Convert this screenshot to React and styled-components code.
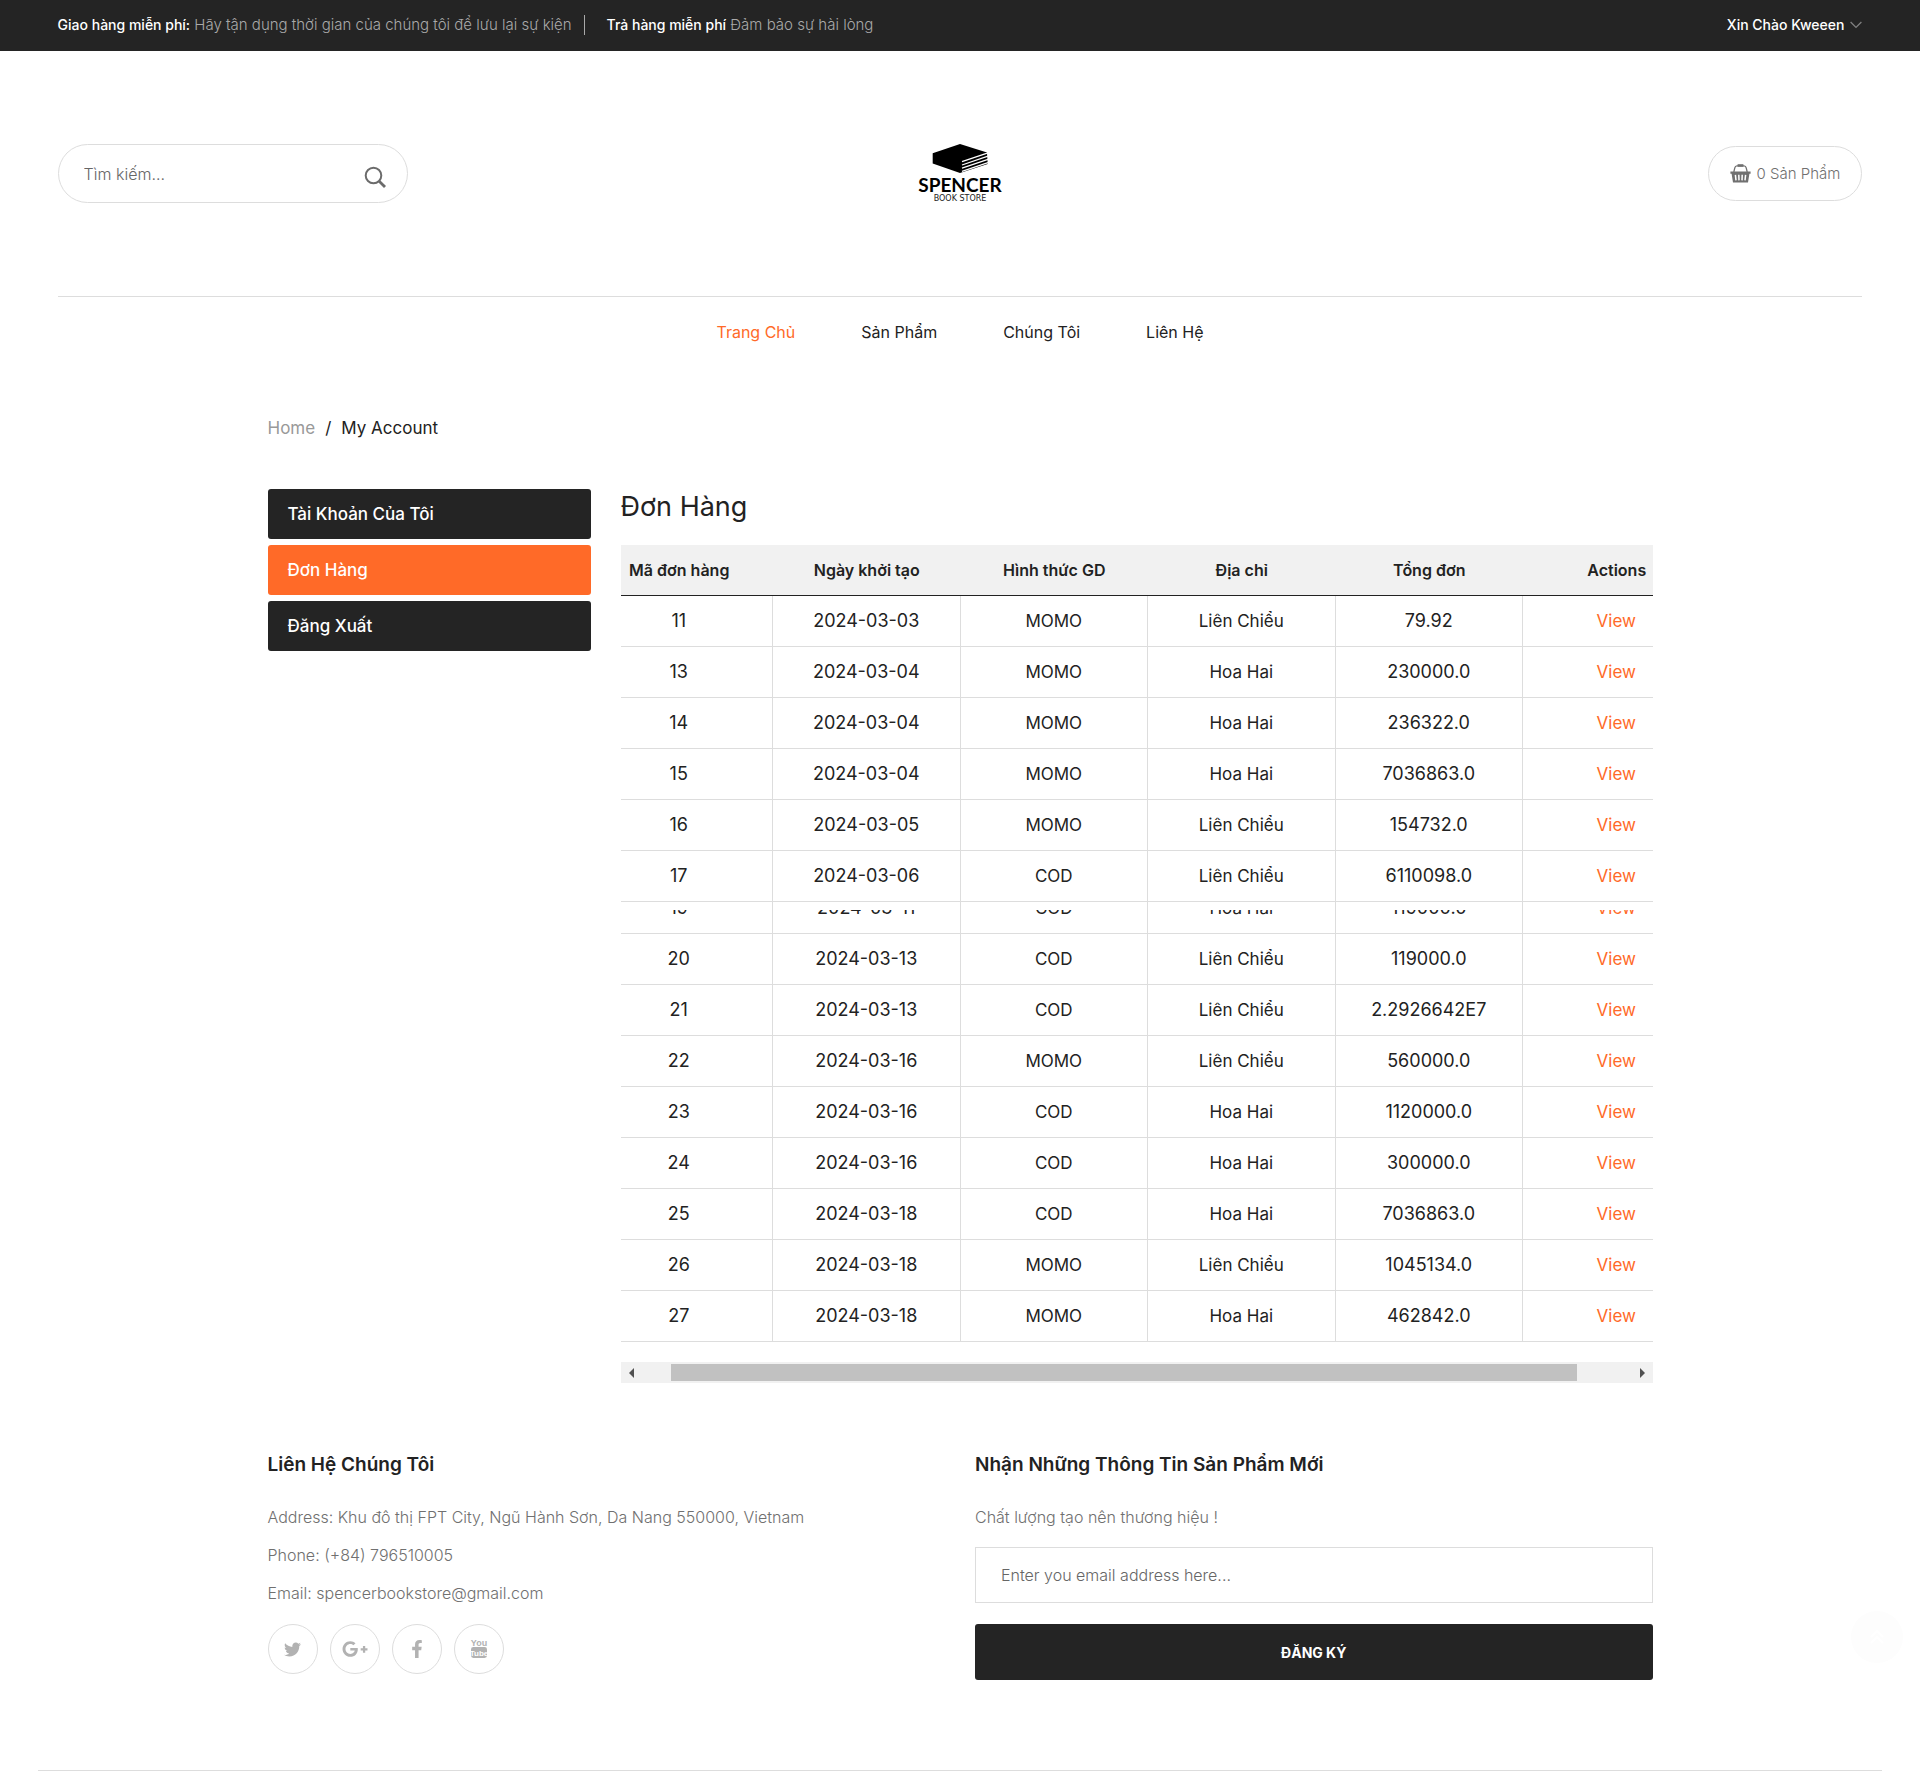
import React, { useLayoutEffect, useRef } from "react";
import styled, { createGlobalStyle } from "styled-components";
import { FaTwitter, FaFacebookF, FaGooglePlusG } from "react-icons/fa";

const ink = "#222222";
const dark = "#242424";
const accent = "#ff6a28";
const line = "#dddddd";
const muted = "#707070";

const GlobalStyle = createGlobalStyle`
  * { box-sizing: border-box; }
  body {
    margin: 0;
    background: #fff;
    color: ${ink};
    font-family: Inter, "Liberation Sans", sans-serif;
    font-size: 16px;
    line-height: 30px;
  }
  a { color: inherit; text-decoration: none; }
  h2, h3, p, ul { margin: 0; padding: 0; }
  ul { list-style: none; }
  button, input { font-family: inherit; }
`;

const TopBar = styled.div`
  display: flex;
  justify-content: space-between;
  align-items: center;
  height: 51px;
  padding: 0 3%;
  background: ${dark};
  color: #a9a9a9;
  font-size: 15px;
  font-weight: 300;
  line-height: 20px;
`;

const Notices = styled.ul`
  display: flex;
  align-items: center;
  padding-bottom: 2px;
`;

const Notice = styled.li`
  padding-left: ${(p) => (p.$divided ? 22 : 0)}px;
  margin-left: ${(p) => (p.$divided ? 12 : 0)}px;
  border-left: ${(p) => (p.$divided ? "1px solid #a9a9a9" : "0")};
`;

const NoticeTitle = styled.span`
  color: #fff;
  font-weight: 500;
  font-size: 14px;
`;

const UserMenu = styled.button`
  display: flex;
  align-items: center;
  gap: 6px;
  padding: 0 0 2px;
  border: 0;
  background: none;
  color: #fff;
  font-size: 14px;
  font-weight: 500;
  line-height: 20px;
`;

const Header = styled.header`
  margin: 0 3%;
`;

const HeaderMain = styled.div`
  display: grid;
  grid-template-columns: 1fr auto 1fr;
  align-items: center;
  padding: 93px 0;
  border-bottom: 1px solid ${line};
`;

const SearchForm = styled.form`
  display: flex;
  align-items: center;
  width: 350px;
  height: 59px;
  padding: 0 20px 0 25px;
  border: 1px solid ${line};
  border-radius: 30px;
`;

const SearchInput = styled.input`
  flex: 1;
  min-width: 0;
  border: 0;
  outline: 0;
  padding: 0;
  background: none;
  font-size: 16px;
  font-weight: 300;
  &::placeholder { color: #666; opacity: 1; }
`;

const IconButton = styled.button`
  display: flex;
  padding: 8px 0 0;
  border: 0;
  background: none;
  color: #6b6b6b;
`;

const LogoLink = styled.a`
  display: flex;
`;

const CartLink = styled.a`
  justify-self: end;
  display: flex;
  align-items: center;
  gap: 6px;
  height: 55px;
  padding: 0 21px;
  border: 1px solid ${line};
  border-radius: 28px;
  color: ${muted};
  font-size: 15px;
  font-weight: 300;
`;

const Nav = styled.nav`
  display: flex;
  justify-content: center;
  gap: 66px;
  line-height: 70px;
`;

const NavLink = styled.a`
  color: ${(p) => (p.$active ? accent : ink)};
`;

const Container = styled.div`
  width: 100%;
  max-width: 1415px;
  margin: 0 auto;
  padding: 0 15px;
`;

const Breadcrumb = styled.nav`
  display: flex;
  gap: 10px;
  padding: 46px 0;
  font-size: 17px;
`;

const CrumbLink = styled.a`
  color: #999;
`;

const Account = styled.main`
  display: grid;
  grid-template-columns: minmax(0, 323fr) minmax(0, 1032fr);
  gap: 30px;
`;

const Tabs = styled.nav`
  display: flex;
  flex-direction: column;
  gap: 6px;
`;

const Tab = styled.a`
  padding: 0 20px;
  border-radius: 3px;
  background: ${(p) => (p.$active ? accent : dark)};
  color: #fff;
  font-size: 17px;
  font-weight: 500;
  line-height: 50px;
`;

const PanelTitle = styled.h3`
  margin-bottom: 20px;
  font-size: 27px;
  font-weight: 400;
  line-height: 36px;
`;

const TableScroller = styled.div`
  overflow: hidden;
`;

const Table = styled.table`
  width: 1125px;
  margin-bottom: 20px;
  table-layout: fixed;
  border-collapse: separate;
  border-spacing: 0;
  text-align: center;
`;

const HeadCell = styled.th`
  height: 51px;
  padding: 0;
  border-bottom: 1px solid ${ink};
  background: #f1f1f1;
  font-size: 16px;
  font-weight: 600;
`;

const Cell = styled.td`
  padding: ${(p) => (p.$short ? "8px 0 0" : "0")};
  border-bottom: 1px solid ${line};
  border-right: 1px solid ${line};
  font-size: ${(p) => (p.$numeric ? 18 : 17)}px;
`;

const CellContent = styled.div`
  display: flex;
  flex-direction: column;
  justify-content: flex-end;
  height: ${(p) => (p.$short ? 23 : 50)}px;
  line-height: 50px;
  overflow: hidden;
`;

const ViewLink = styled.a`
  color: ${accent};
`;

const ScrollBar = styled.div`
  display: flex;
  align-items: center;
  justify-content: space-between;
  height: 21px;
  padding: 0 8px;
  background: #f1f1f1;
`;

const ScrollTrack = styled.div`
  flex: 1;
  display: flex;
  height: 17px;
  margin: 0 8px;
`;

const ScrollThumb = styled.div`
  width: 91.5%;
  margin-left: 3%;
  background: #c1c1c1;
`;

const ScrollArrow = styled.span`
  width: 0;
  height: 0;
  border: solid transparent;
  border-width: 5px;
  border-left: ${(p) => (p.$right ? "5px solid #505050" : "0")};
  border-right: ${(p) => (p.$right ? "0" : "5px solid #505050")};
`;

const FooterGrid = styled.footer`
  display: grid;
  grid-template-columns: 1fr 1fr;
  gap: 30px;
  padding: 67px 0 90px;
`;

const FooterTitle = styled.h3`
  margin-bottom: 22px;
  font-size: 19px;
  font-weight: 600;
`;

const ContactList = styled.ul`
  display: flex;
  flex-direction: column;
  gap: 8px;
  margin-bottom: 16px;
  color: ${muted};
  font-weight: 300;
`;

const Socials = styled.div`
  display: flex;
  gap: 12px;
`;

const SocialLink = styled.a`
  display: flex;
  align-items: center;
  justify-content: center;
  width: 50px;
  height: 50px;
  border: 1px solid ${line};
  border-radius: 50%;
  color: #b2b2b2;
`;

const Newsletter = styled.form`
  display: flex;
  flex-direction: column;
`;

const Slogan = styled.p`
  margin-bottom: 15px;
  color: ${muted};
  font-weight: 300;
`;

const EmailInput = styled.input`
  height: 56px;
  margin-bottom: 21px;
  padding: 0 25px;
  border: 1px solid ${line};
  font-size: 16px;
  font-weight: 300;
  &::placeholder { color: #666; opacity: 1; }
`;

const SubmitButton = styled.button`
  height: 56px;
  border: 0;
  border-radius: 3px;
  background: ${dark};
  color: #fff;
  font-size: 14px;
  font-weight: 700;
`;

const FooterRule = styled.hr`
  margin: 0 2%;
  border: 0;
  border-top: 1px solid ${line};
`;

const BackToTop = styled.a`
  position: fixed;
  right: 17px;
  bottom: 108px;
  display: flex;
  align-items: center;
  justify-content: center;
  width: 52px;
  height: 52px;
  border-radius: 50%;
  background: #fdfdfd;
  color: #fff;
`;

const Logo = () => (
  <svg width="96" height="59" viewBox="-6 0 96 59" role="img" aria-label="Spencer Book Store">
    <path d="M42 0 L69 8.6 L69.7 20 L42 29 L14.7 19.4 V9.3 Z" fill="#000" />
    <g stroke="#fff" strokeWidth="1.3">
      <path d="M44 17.6 L70 8.8" />
      <path d="M44 21 L70 12.2" />
      <path d="M44 24.2 L70 15.4" />
      <path d="M44 27.4 L70 18.6" />
    </g>
    <text x="42" y="48" textAnchor="middle" fontFamily="Lato, sans-serif" fontWeight="700" fontSize="19">SPENCER</text>
    <text x="42" y="57" textAnchor="middle" fontFamily="'DejaVu Sans', sans-serif" fontSize="8" fill="#222">BOOK STORE</text>
  </svg>
);

const SearchIcon = () => (
  <svg width="23" height="23" viewBox="0 0 23 23" fill="none" stroke="currentColor">
    <circle cx="9.5" cy="9.5" r="7.8" strokeWidth="2" />
    <path d="M15.2 15.2 L21 21" strokeWidth="2.8" />
  </svg>
);

const BasketIcon = () => (
  <svg width="21" height="19" viewBox="0 0 21 19" fill="none" stroke="currentColor">
    <path d="M3.8 8 L4.8 3.8 Q5.2 1.8 7 1.8 H14 Q15.8 1.8 16.2 3.8 L17.2 8" strokeWidth="1.3" />
    <path d="M7.6 1.5 H13.4" strokeWidth="2.6" />
    <path d="M0.4 7.6 H20.6 V9.8 H19.4 L18 18.6 H3 L1.6 9.8 H0.4 Z" fill="currentColor" stroke="none" />
    <path d="M5.4 10.8 L6 16.4 M8.8 10.8 L9 16.4 M12.2 10.8 L12 16.4 M15.6 10.8 L15 16.4" stroke="#fff" strokeWidth="1.5" />
  </svg>
);

const ChevronIcon = () => (
  <svg width="12" height="8" viewBox="0 0 12 8" fill="none" stroke="#808080" strokeWidth="1.3">
    <path d="M0.6 1 L6 6.4 L11.4 1" />
  </svg>
);

const YoutubeIcon = () => (
  <svg width="18" height="22" viewBox="0 0 18 22" fill="currentColor">
    <text x="9" y="8" textAnchor="middle" fontFamily="'Liberation Sans Narrow', sans-serif" fontWeight="700" fontSize="9">You</text>
    <rect x="1" y="9" width="16" height="11" rx="2.4" />
    <text x="9" y="18" textAnchor="middle" fill="#fff" fontFamily="'Liberation Sans Narrow', sans-serif" fontWeight="700" fontSize="8">Tube</text>
  </svg>
);

const DoubleUpIcon = () => (
  <svg width="16" height="16" viewBox="0 0 16 16" fill="none" stroke="currentColor" strokeWidth="2">
    <path d="M2 8 L8 2 L14 8 M2 14 L8 8 L14 14" />
  </svg>
);

const navItems = ["Trang Chủ", "Sản Phẩm", "Chúng Tôi", "Liên Hệ"];
const tabs = ["Tài Khoản Của Tôi", "Đơn Hàng", "Đăng Xuất"];
const columns = ["Mã đơn hàng", "Ngày khởi tạo", "Hình thức GD", "Địa chỉ", "Tổng đơn", "Actions"];
const orders = [
  ["11", "2024-03-03", "MOMO", "Liên Chiểu", "79.92"],
  ["13", "2024-03-04", "MOMO", "Hoa Hai", "230000.0"],
  ["14", "2024-03-04", "MOMO", "Hoa Hai", "236322.0"],
  ["15", "2024-03-04", "MOMO", "Hoa Hai", "7036863.0"],
  ["16", "2024-03-05", "MOMO", "Liên Chiểu", "154732.0"],
  ["17", "2024-03-06", "COD", "Liên Chiểu", "6110098.0"],
  ["19", "2024-03-11", "COD", "Hoa Hai", "119000.0"],
  ["20", "2024-03-13", "COD", "Liên Chiểu", "119000.0"],
  ["21", "2024-03-13", "COD", "Liên Chiểu", "2.2926642E7"],
  ["22", "2024-03-16", "MOMO", "Liên Chiểu", "560000.0"],
  ["23", "2024-03-16", "COD", "Hoa Hai", "1120000.0"],
  ["24", "2024-03-16", "COD", "Hoa Hai", "300000.0"],
  ["25", "2024-03-18", "COD", "Hoa Hai", "7036863.0"],
  ["26", "2024-03-18", "MOMO", "Liên Chiểu", "1045134.0"],
  ["27", "2024-03-18", "MOMO", "Hoa Hai", "462842.0"],
];
const shortRow = "19";
const numericColumns = [0, 1, 4];

function OrdersTable() {
  const scroller = useRef(null);
  useLayoutEffect(() => {
    scroller.current.scrollLeft = 35;
  }, []);
  return (
    <div>
      <TableScroller ref={scroller}>
        <Table>
          <thead>
            <tr>{columns.map((c) => <HeadCell key={c} scope="col">{c}</HeadCell>)}</tr>
          </thead>
          <tbody>
            {orders.map((order) => {
              const short = order[0] === shortRow;
              return (
                <tr key={order[0]}>
                  {order.map((value, i) => (
                    <Cell key={i} $numeric={numericColumns.includes(i)} $short={short}>
                      <CellContent $short={short}>{value}</CellContent>
                    </Cell>
                  ))}
                  <Cell $short={short}>
                    <CellContent $short={short}><ViewLink href="#">View</ViewLink></CellContent>
                  </Cell>
                </tr>
              );
            })}
          </tbody>
        </Table>
      </TableScroller>
      <ScrollBar aria-hidden="true">
        <ScrollArrow />
        <ScrollTrack><ScrollThumb /></ScrollTrack>
        <ScrollArrow $right />
      </ScrollBar>
    </div>
  );
}

export default function App() {
  return (
    <>
      <GlobalStyle />
      <TopBar>
        <Notices>
          <Notice><NoticeTitle>Giao hàng miễn phí:</NoticeTitle> Hãy tận dụng thời gian của chúng tôi để lưu lại sự kiện</Notice>
          <Notice $divided><NoticeTitle>Trả hàng miễn phí</NoticeTitle> Đảm bảo sự hài lòng</Notice>
        </Notices>
        <UserMenu type="button">Xin Chào Kweeen <ChevronIcon /></UserMenu>
      </TopBar>
      <Header>
        <HeaderMain>
          <SearchForm role="search">
            <SearchInput type="text" aria-label="Tìm kiếm" placeholder="Tìm kiếm..." />
            <IconButton type="button" aria-label="Tìm kiếm"><SearchIcon /></IconButton>
          </SearchForm>
          <LogoLink href="#"><Logo /></LogoLink>
          <CartLink href="#"><BasketIcon />0 Sản Phẩm</CartLink>
        </HeaderMain>
        <Nav>
          {navItems.map((item, i) => <NavLink key={item} href="#" $active={i === 0}>{item}</NavLink>)}
        </Nav>
      </Header>
      <Container>
        <Breadcrumb aria-label="Breadcrumb">
          <CrumbLink href="#">Home</CrumbLink>
          <span>/</span>
          <span>My Account</span>
        </Breadcrumb>
        <Account>
          <Tabs>
            {tabs.map((tab, i) => <Tab key={tab} href="#" $active={i === 1}>{tab}</Tab>)}
          </Tabs>
          <section>
            <PanelTitle>Đơn Hàng</PanelTitle>
            <OrdersTable />
          </section>
        </Account>
        <FooterGrid>
          <section>
            <FooterTitle>Liên Hệ Chúng Tôi</FooterTitle>
            <ContactList>
              <li>Address: Khu đô thị FPT City, Ngũ Hành Sơn, Da Nang 550000, Vietnam</li>
              <li>Phone: <a href="tel:+84796510005">(+84) 796510005</a></li>
              <li>Email: <a href="mailto:spencerbookstore@gmail.com">spencerbookstore@gmail.com</a></li>
            </ContactList>
            <Socials>
              <SocialLink href="#" aria-label="Twitter"><FaTwitter size={17} /></SocialLink>
              <SocialLink href="#" aria-label="Google Plus"><FaGooglePlusG size={26} /></SocialLink>
              <SocialLink href="#" aria-label="Facebook"><FaFacebookF size={18} /></SocialLink>
              <SocialLink href="#" aria-label="YouTube"><YoutubeIcon /></SocialLink>
            </Socials>
          </section>
          <Newsletter>
            <FooterTitle>Nhận Những Thông Tin Sản Phẩm Mới</FooterTitle>
            <Slogan>Chất lượng tạo nên thương hiệu !</Slogan>
            <EmailInput type="email" aria-label="Email" placeholder="Enter you email address here..." />
            <SubmitButton type="button">ĐĂNG KÝ</SubmitButton>
          </Newsletter>
        </FooterGrid>
      </Container>
      <FooterRule />
      <BackToTop href="#" aria-label="Back to top"><DoubleUpIcon /></BackToTop>
    </>
  );
}
